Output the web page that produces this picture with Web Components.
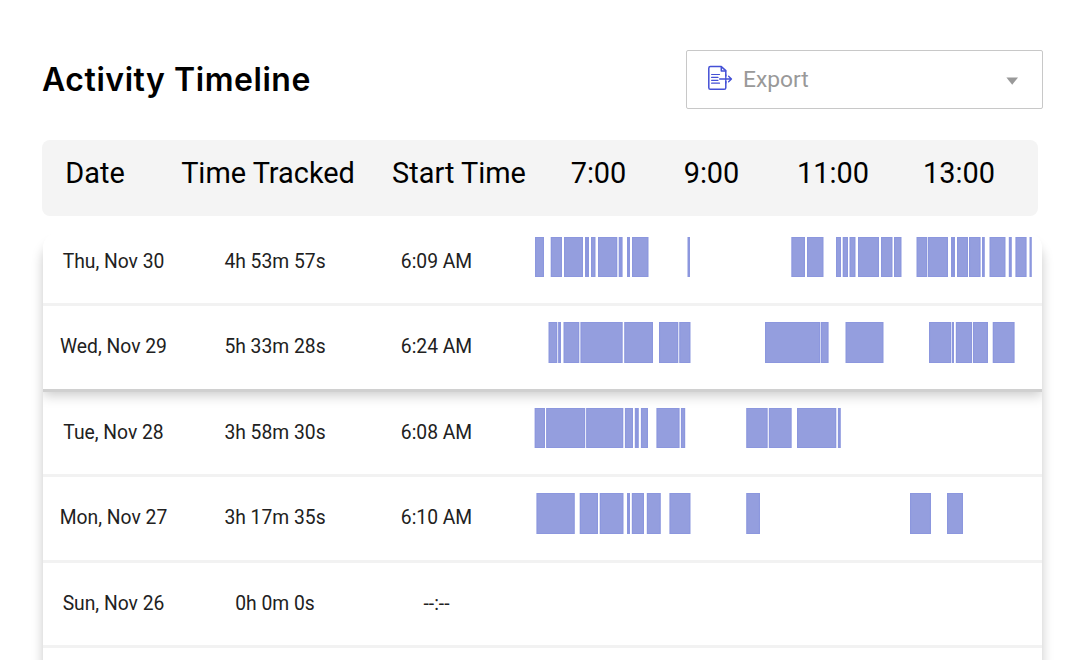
<!DOCTYPE html>
<html lang="en">
<head>
<meta charset="utf-8">
<title>Activity Timeline</title>
<style>
html,body{margin:0;height:100%;overflow:hidden;background:#fff}
body{font-family:Roboto,"Liberation Sans",sans-serif;color:#000}
</style>
</head>
<body>
<activity-page></activity-page>
<script>
const define = (name, html, setup) => {
  const template = document.createElement('template');
  template.innerHTML = html;
  customElements.define(name, class extends HTMLElement {
    constructor() {
      super();
      this.attachShadow({mode: 'open'}).append(template.content.cloneNode(true));
    }
    connectedCallback() { if (setup) setup(this, this.shadowRoot); }
  });
};

define('export-select', `
<style>
:host{display:flex;align-items:center;box-sizing:border-box;width:357px;height:58.5px;border:1.5px solid #c8c8c8;border-radius:2px;padding:0 24px 0 20px;color:#999;font-size:22.8px;background:#fff}
.icon{width:26px;height:26px;margin:-3px 10px 0 0}
.label{flex:1;line-height:28px;margin-top:1px}
.caret{width:12px;height:8px;margin-top:4px}
</style>
<svg class="icon" viewBox="0 0 26 26" fill="none" stroke="#4450d6" stroke-width="1.5" stroke-linecap="round" stroke-linejoin="round">
<path d="M18.8 11V5.6L14.3 1.6H3.4Q1.8 1.6 1.8 3.2V22.7Q1.8 24.3 3.4 24.3H17.2Q18.8 24.3 18.8 22.7V16.5"/>
<path d="M14.3 1.8V6H18.6"/>
<path stroke-width="1.2" d="M4.6 9.5H12.5M4.6 12.4H11M4.6 15.3H11M4.6 18.2H12.5"/><path stroke-width="1.3" d="M12.6 14H24.5M21.6 11.2L24.5 14L21.6 16.8M18.8 10V18"/>
</svg>
<span class="label"><slot></slot></span>
<svg class="caret" viewBox="0 0 12 8"><path d="M.4 .4H12L6.2 7.8Z" fill="#999"/></svg>`);

define('timeline-head', `
<style>
:host{display:grid;grid-template-columns:106px 240px 142px 137px 89px 154px 98px;margin-right:5px;box-sizing:border-box;height:76px;padding:16px 0 0;border-radius:8px;background:#f4f4f4;font-size:28.9px;line-height:35px}
::slotted(span){text-align:center;white-space:nowrap}
</style><slot></slot>`);

define('activity-track', `
<style>:host{display:block;height:41px}svg{display:block}</style>
<svg width="509" height="41"></svg>`, (el, root) => {
  const origin = 533, h = Number(el.getAttribute('bar-height') || 40);
  root.querySelector('svg').innerHTML = (el.getAttribute('spans') || '').split(' ').filter(Boolean).map(s => {
    const [a, b] = s.split('-').map(Number), x = a - origin, w = b - a;
    return `<rect x="${x}" width="${w}" height="${h}" fill="#8c97de"/>` +
      (w > 4 ? `<rect x="${x + 1.2}" y="1" width="${w - 2.4}" height="${h - 2}" fill="#949ede"/>` : '');
  }).join('');
});

define('day-row', `
<style>
:host{display:grid;grid-template-columns:141px 182px 141px 26px 509px;box-sizing:border-box;height:var(--h,85px);padding-top:var(--top,16px);border-bottom:3px solid #f2f2f2;background:#fff;color:#212121;font-size:19.3px;line-height:49px}
:host([raised]){position:relative;border-bottom-color:#d0d0d0;box-shadow:0 3px 12px rgba(0,0,0,.22);clip-path:inset(0 0 -24px 0)}
span{text-align:center;white-space:nowrap}
activity-track{grid-column:5}
</style>
<span class="date"></span><span class="total"></span><span class="start"></span><activity-track></activity-track>`, (el, root) => {
  for (const k of ['date', 'total', 'start']) root.querySelector('.' + k).textContent = el.getAttribute(k) || '';
  const track = document.createElement('activity-track');
  track.setAttribute('spans', el.getAttribute('spans') || '');
  track.setAttribute('bar-height', el.getAttribute('bar-height') || '40');
  root.querySelector('activity-track').replaceWith(track);
});

define('day-list', `
<style>
:host{display:block;width:999px;height:500px;margin:16px 0 0 1px;border-radius:16px 16px 0 0;background:#fff;box-shadow:0 12px 12px rgba(0,0,0,.22)}
.clip{border-radius:16px 16px 0 0;overflow:hidden}
</style><div class="clip"><slot></slot></div>`);

define('activity-page', `
<style>
:host{display:block;box-sizing:border-box;width:1084px;height:660px;padding:50px 41px 0 42px;overflow:hidden}
header{display:flex;justify-content:space-between;height:90px}
h1{margin:9px 0 0;font:600 32px/42px Inter,sans-serif;letter-spacing:.55px;white-space:nowrap}
</style>
<header><h1>Activity Timeline</h1><export-select>Export</export-select></header>
<timeline-head><span>Date</span><span>Time Tracked</span><span>Start Time</span><span>7:00</span><span>9:00</span><span>11:00</span><span>13:00</span></timeline-head>
<day-list>
<day-row style="--h:74px;--top:5px" date="Thu, Nov 30" total="4h 53m 57s" start="6:09 AM" spans="535-544 550.7-562 564-583 585-589 591-595.5 598-617.3 618.7-622.6 627-630 632-648.5 687.5-690 791.3-805 807-823.5 836-841 842.7-848 849.5-855.5 858-879 881-892.5 894-901.5 916.5-927.3 928-948 951-955 957-968 969-980.6 982-984.8 989.5-1005.5 1008.8-1011.8 1015.4-1026.6 1029.5-1031.8"></day-row>
<day-row raised style="--h:86px" bar-height="41" date="Wed, Nov 29" total="5h 33m 28s" start="6:24 AM" spans="548.5-557.3 558.1-561 563.5-579.3 580.4-622.7 624.2-653 659-678.3 679.2-690.5 765-820.3 820.9-828.6 845.5-883.5 929-951.3 952-954 955.8-972 972.9-988 992.7-1014.6"></day-row>
<day-row date="Tue, Nov 28" total="3h 58m 30s" start="6:08 AM" spans="534.6-545 546.1-585.2 586.1-623.3 624.9-633 634.8-638.8 640.9-648 656.4-679.6 680.9-685.2 746.2-767.7 768.8-791.7 797-836.3 837.9-840.8"></day-row>
<day-row style="--h:86px" bar-height="41" date="Mon, Nov 27" total="3h 17m 35s" start="6:10 AM" spans="536.4-574.8 579.7-598 599.7-623.5 627-630 631.8-644 646.8-660.8 669.4-690.5 746.2-760 910-931 947-963"></day-row>
<day-row date="Sun, Nov 26" total="0h 0m 0s" start="--:--"></day-row>
</day-list>`);
</script>
</body>
</html>
